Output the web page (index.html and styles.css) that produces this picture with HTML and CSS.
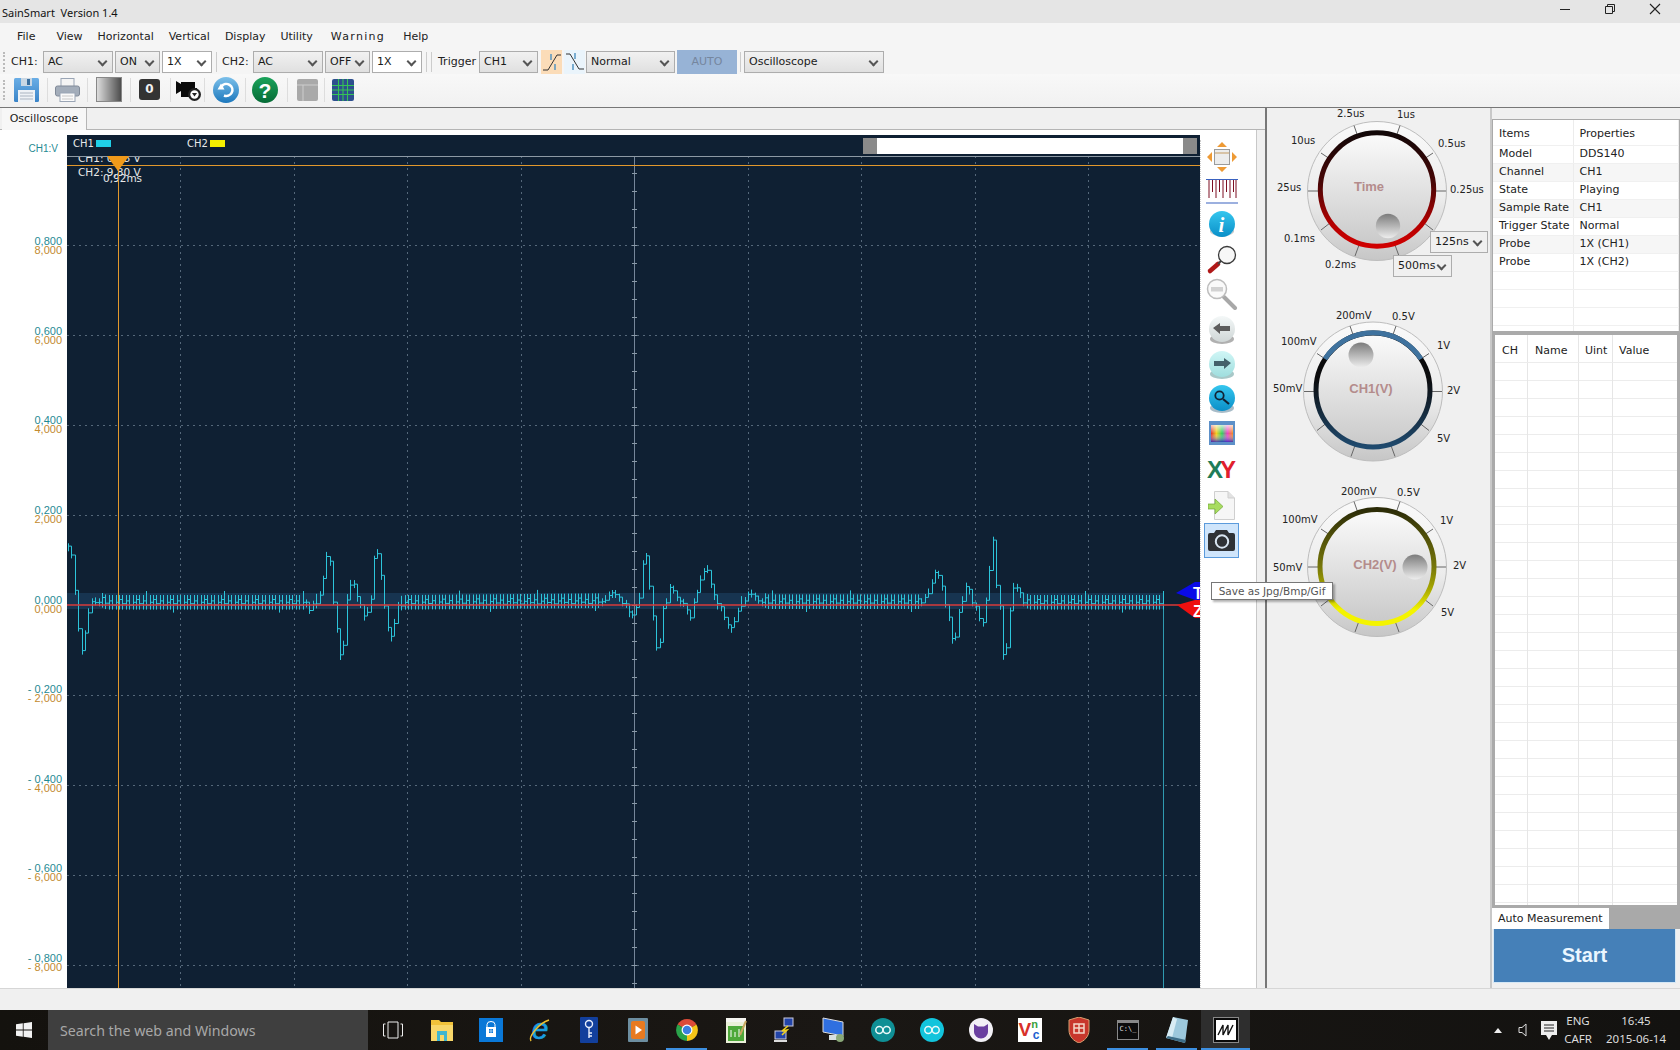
FILE: index.html
```html
<!DOCTYPE html>
<html lang="en">
<head>
<meta charset="utf-8">
<title>SainSmart Version 1.4</title>
<link rel="stylesheet" href="styles.css">
</head>
<body>
<svg class="defs" aria-hidden="true">
  <defs>
    <linearGradient id="dialOuter" x1="0" y1="0" x2="0" y2="1"><stop offset="0" stop-color="#fafafa"/><stop offset=".55" stop-color="#ececec"/><stop offset="1" stop-color="#c6c6c6"/></linearGradient>
    <linearGradient id="dialInner" x1="0" y1="0" x2="0" y2="1"><stop offset="0" stop-color="#fbfbfb"/><stop offset="1" stop-color="#c9c9c9"/></linearGradient>
    <linearGradient id="ball" x1="0" y1="0" x2="0" y2="1"><stop offset="0" stop-color="#7c7c7c"/><stop offset="1" stop-color="#ededed"/></linearGradient>
    <linearGradient id="ringTime" x1="0" y1="0" x2="0" y2="1"><stop offset="0" stop-color="#120808"/><stop offset=".45" stop-color="#4a0606"/><stop offset=".8" stop-color="#b30000"/><stop offset="1" stop-color="#d00000"/></linearGradient>
    <linearGradient id="ringCh1" x1="0" y1="0" x2="0" y2="1"><stop offset="0" stop-color="#0a0a0a"/><stop offset=".4" stop-color="#0c0c0e"/><stop offset="1" stop-color="#1f4a6e"/></linearGradient>
    <linearGradient id="ringCh2" x1="0" y1="0" x2="0" y2="1"><stop offset="0" stop-color="#2c2c08"/><stop offset=".5" stop-color="#76760a"/><stop offset=".7" stop-color="#a8a800"/><stop offset=".88" stop-color="#f4f400"/><stop offset="1" stop-color="#f4f400"/></linearGradient>
    <linearGradient id="cyanBall" x1="0" y1="0" x2="0" y2="1"><stop offset="0" stop-color="#35c6ee"/><stop offset="1" stop-color="#0a8fc8"/></linearGradient>
    <linearGradient id="paleBall" x1="0" y1="0" x2="0" y2="1"><stop offset="0" stop-color="#f4f8f8"/><stop offset="1" stop-color="#cfd6d6"/></linearGradient>
    <linearGradient id="mintBall" x1="0" y1="0" x2="0" y2="1"><stop offset="0" stop-color="#d0f6f6"/><stop offset="1" stop-color="#9fdede"/></linearGradient>
    <linearGradient id="floppy" x1="0" y1="0" x2="0" y2="1"><stop offset="0" stop-color="#6aaee6"/><stop offset="1" stop-color="#3a84c8"/></linearGradient>
    <linearGradient id="shade" x1="0" y1="0" x2="1" y2="0"><stop offset="0" stop-color="#e0e0e0"/><stop offset="1" stop-color="#4a4a4a"/></linearGradient>
    <linearGradient id="rainbow" x1="0" y1="0" x2="1" y2="0"><stop offset="0" stop-color="#e03030"/><stop offset=".25" stop-color="#f0d020"/><stop offset=".5" stop-color="#30d060"/><stop offset=".75" stop-color="#f040c0"/><stop offset="1" stop-color="#f09020"/></linearGradient>
    <linearGradient id="fade" x1="0" y1="0" x2="0" y2="1"><stop offset="0" stop-color="#fff" stop-opacity=".75"/><stop offset=".5" stop-color="#fff" stop-opacity="0"/><stop offset="1" stop-color="#2020c0" stop-opacity=".8"/></linearGradient>
    <linearGradient id="helpBall" x1="0" y1="0" x2="0" y2="1"><stop offset="0" stop-color="#1aa35a"/><stop offset="1" stop-color="#066b36"/></linearGradient>
    <linearGradient id="refreshBall" x1="0" y1="0" x2="0" y2="1"><stop offset="0" stop-color="#7cc0ea"/><stop offset="1" stop-color="#1c78bd"/></linearGradient>
    <g id="dial">
      <circle r="69.5" fill="url(#dialOuter)" stroke="#bdbdbd"/>
      <g stroke="#666" stroke-width="1">
        <path d="M-23 -65.5L-19 -54"/><path d="M23 -65.5L19 -54"/>
        <path d="M-56 -38L-47 -32"/><path d="M56 -38L47 -32"/>
        <path d="M-69 0H-58"/><path d="M69 0H58"/>
        <path d="M-56 39L-47 32"/><path d="M56 39L47 32"/>
        <path d="M-22 65L-18 54"/><path d="M22 65L18 54"/>
      </g>
    </g>
  </defs>
</svg>

<header class="titlebar">
  <span class="title">SainSmart  Version 1.4</span>
  <div class="winbtns">
    <svg width="12" height="12" viewBox="0 0 12 12"><path d="M1 6.5H11" stroke="#222"/></svg>
    <svg width="12" height="12" viewBox="0 0 12 12"><path d="M1.5 3.5H8.5V10.5H1.5ZM3.5 3.5V1.5H10.5V8.5H8.5" fill="none" stroke="#222"/></svg>
    <svg width="12" height="12" viewBox="0 0 12 12"><path d="M1 1L11 11M11 1L1 11" stroke="#222" stroke-width="1.1"/></svg>
  </div>
</header>

<nav class="menubar">
  <span class="menu-first">File</span><span>View</span><span>Horizontal</span><span>Vertical</span><span>Display</span><span>Utility</span><span class="menu-warn">Warning</span><span>Help</span>
</nav>

<div class="toolbar-one">
  <i class="grip"></i>
  <span class="lab lab-ch1">CH1:</span>
  <div class="sel w-70">AC</div>
  <div class="sel w-45">ON</div>
  <div class="sel sel-white w-50">1X</div>
  <i class="sep sep-a"></i>
  <span class="lab lab-ch2">CH2:</span>
  <div class="sel w-70">AC</div>
  <div class="sel w-45">OFF</div>
  <div class="sel sel-white w-50">1X</div>
  <i class="sep sep-a"></i><i class="sep sep-b"></i>
  <span class="lab lab-trig">Trigger</span>
  <div class="sel w-59">CH1</div>
  <div class="edge edge-up">
    <svg width="20" height="20" viewBox="0 0 20 20"><path d="M1 18H6L15 3H19" fill="none" stroke="#333"/><path d="M9 2V8M13 12V18" stroke="#4a90c0" stroke-width="1.4"/></svg>
  </div>
  <div class="edge edge-down">
    <svg width="20" height="20" viewBox="0 0 20 20"><path d="M1 2H5L14 17H19" fill="none" stroke="#333"/><path d="M10 1V7M8 12V18" stroke="#4a90c0" stroke-width="1.4"/></svg>
  </div>
  <div class="sel w-89">Normal</div>
  <div class="auto">AUTO</div>
  <i class="sep sep-c"></i>
  <div class="sel w-140">Oscilloscope</div>
</div>

<div class="toolbar-two">
  <i class="grip grip-two"></i>
  <svg class="tb-ico ico-save" width="25" height="24" viewBox="0 0 25 24"><rect width="25" height="24" rx="1.5" fill="url(#floppy)"/><rect x="7" y="0" width="11" height="8" fill="#c9d7e4"/><rect x="13" y="1" width="3" height="6" fill="#3a6f9f"/><rect x="4" y="12" width="17" height="12" fill="#eef2f6"/><path d="M6 15H19M6 18H19M6 21H19" stroke="#aab4c0"/></svg>
  <i class="tb-sep"></i>
  <svg class="tb-ico" width="25" height="24" viewBox="0 0 25 24"><rect x="6" y="0.5" width="13" height="8" fill="#f4f4f4" stroke="#9aa5b5"/><rect x="0.5" y="8" width="24" height="10" rx="2" fill="#a3adba" stroke="#808a98"/><rect x="5" y="15" width="15" height="8.5" fill="#fafafa" stroke="#9aa5b5"/><path d="M7 18H18M7 21H18" stroke="#c8c8c8"/></svg>
  <i class="tb-sep sep-t2"></i>
  <svg class="tb-ico" width="26" height="25" viewBox="0 0 26 25"><rect x=".5" y=".5" width="25" height="24" fill="url(#shade)" stroke="#888"/></svg>
  <i class="tb-sep sep-t3"></i>
  <div class="zero">0</div>
  <i class="tb-sep sep-t4"></i>
  <svg class="tb-ico" width="25" height="22" viewBox="0 0 25 22"><path d="M0 2L5 5V3H19V9H21V18H5V12L0 15Z" fill="#0a0a0a"/><circle cx="18.5" cy="15.5" r="6.5" fill="#222"/><circle cx="18.5" cy="15.5" r="4.2" fill="#fff"/><path d="M16 14H21L18.5 17.5Z" fill="#222"/></svg>
  <i class="tb-sep sep-t5"></i>
  <svg class="tb-ico" width="26" height="26" viewBox="0 0 26 26"><circle cx="13" cy="13" r="13" fill="url(#refreshBall)"/><path d="M8.5 9.5A6 6 0 1 1 11 18.5" fill="none" stroke="#fff" stroke-width="2.6"/><path d="M4.5 12.5H11.5L8 6.5Z" fill="#fff"/></svg>
  <i class="tb-sep sep-t8"></i>
  <svg class="tb-ico" width="26" height="26" viewBox="0 0 26 26"><circle cx="13" cy="13" r="13" fill="url(#helpBall)"/><text class="help-q" x="13" y="20.5" text-anchor="middle">?</text></svg>
  <i class="tb-sep sep-t6"></i>
  <svg class="tb-ico" width="21" height="22" viewBox="0 0 21 22"><rect width="21" height="22" rx="2" fill="#a9a9a9"/><path d="M0 6H21M6 6V22" stroke="#cdcdcd"/></svg>
  <i class="tb-sep sep-t7"></i>
  <svg class="tb-ico" width="22" height="22" viewBox="0 0 22 22"><rect width="22" height="22" rx="2" fill="#2d4f8e"/><path d="M0 6.5H22M0 11H22M0 15.5H22M6.5 0V22M11 0V22M15.5 0V22" stroke="#35c455" stroke-width="1.1"/></svg>
</div>

<main class="main">
  <section class="left">
    <div class="tabrow"><div class="tab">Oscilloscope</div></div>
    <div class="panel">
      <div class="axis">
        <div class="axis-name">CH1:V</div>
        <div class="tick"><b>0,800</b><em>8,000</em></div>
        <div class="tick"><b>0,600</b><em>6,000</em></div>
        <div class="tick"><b>0,400</b><em>4,000</em></div>
        <div class="tick"><b>0,200</b><em>2,000</em></div>
        <div class="tick"><b>0,000</b><em>0,000</em></div>
        <div class="tick"><b>- 0,200</b><em>- 2,000</em></div>
        <div class="tick"><b>- 0,400</b><em>- 4,000</em></div>
        <div class="tick"><b>- 0,600</b><em>- 6,000</em></div>
        <div class="tick"><b>- 0,800</b><em>- 8,000</em></div>
      </div>
      <svg class="scope" width="1133" height="853" viewBox="67 135 1133 853">
        <rect x="67" y="135" width="1133" height="853" fill="#0f2033"/>
        <rect x="67" y="593" width="1096" height="16" fill="#173450"/>
        <g class="grid-v">
          <path d="M180.5 156V988"/><path d="M294.5 156V988"/><path d="M407.5 156V988"/><path d="M521.5 156V988"/><path d="M748.5 156V988"/><path d="M861.5 156V988"/><path d="M975.5 156V988"/><path d="M1088.5 156V988"/>
        </g>
        <g class="grid-h">
          <path d="M67 245.5H1200"/><path d="M67 335.5H1200"/><path d="M67 425.5H1200"/><path d="M67 515.5H1200"/><path d="M67 695.5H1200"/><path d="M67 785.5H1200"/><path d="M67 875.5H1200"/><path d="M67 965.5H1200"/>
        </g>
        <path d="M634.5 156V988" stroke="#75869a"/>
        <path class="ticks" d="M634.5 155V988"/>
        <text class="cursor" x="78" y="162">CH1: 0,98 V</text>
        <rect x="67" y="135" width="1133" height="21" fill="#0f2033"/>
        <text class="cursor" x="78" y="176">CH2: 9,80 V</text>
        <text class="cursor" x="103" y="182">0,92ms</text>
        <path d="M67 156.5H1200" stroke="#8d99a4"/>
        <path d="M67 165.5H1200" stroke="#e2982c"/>
        <path d="M118.5 156V988" stroke="#e2982c"/>
        <path d="M107 156H129L118 171Z" fill="#f09a1a"/>
        <path d="M1163.5 605V988" stroke="#2f9ab0"/>
        <path id="wave" fill="none" stroke="#2cc4da" stroke-width="1"/>
        <path d="M67 605H1180" stroke="#d83a3a" stroke-width="1.4"/>
        <path d="M1176 593L1195 582H1200V600H1195Z" fill="#0a0ae8"/>
        <path d="M1177 605L1195 600H1200V618H1195Z" fill="#ee1010"/>
        <text class="marker" x="1193" y="599">T</text>
        <text class="marker" x="1193" y="617">Z</text>
        <text class="legend" x="73" y="147">CH1</text>
        <rect x="96" y="140" width="15" height="7" fill="#20d0e8"/>
        <text class="legend" x="187" y="147">CH2</text>
        <rect x="210" y="140" width="15" height="7" fill="#f6f000"/>
        <rect x="877" y="138" width="306" height="16" fill="#fff"/>
        <rect x="863" y="138" width="14" height="16" fill="#8a8a8a"/>
        <rect x="1183" y="138" width="14" height="16" fill="#8a8a8a"/>
      </svg>
      <div class="tools">
        <svg width="32" height="32" viewBox="0 0 32 32"><path d="M16 1L21 6H11ZM16 31L21 26H11ZM1 16L6 11V21ZM31 16L26 11V21Z" fill="#ee9a35"/><rect x="8.5" y="8.5" width="15" height="15" fill="#ececec" stroke="#9b9b9b"/><path d="M9 12H23" stroke="#c39a60"/></svg>
        <svg width="32" height="26" viewBox="0 0 32 26"><path d="M3 2V20M6.5 2V14M10 2V20M13.5 2V14M17 2V20M20.5 2V14M24 2V20M27.5 2V14M30 2V20" stroke="#7d0f22" stroke-width="1"/><path d="M0 1.5H32M0 25H32" stroke="#3a62c0" stroke-width="1.2"/></svg>
        <svg width="30" height="30" viewBox="0 0 30 30"><path d="M3 19A13 13 0 0 0 27 19V22A13 7 0 0 1 3 22Z" fill="#c8c8c8"/><circle cx="15" cy="14" r="13" fill="url(#cyanBall)"/><text class="info-i" x="14.5" y="22" text-anchor="middle">i</text></svg>
        <svg width="32" height="30" viewBox="0 0 32 30"><path d="M4 26L12 19" stroke="#b01818" stroke-width="4.5" stroke-linecap="round"/><path d="M12 19L15 16" stroke="#444" stroke-width="2"/><circle cx="21" cy="10" r="8.5" fill="#f7f7f7" stroke="#3a3a3a" stroke-width="1.3"/></svg>
        <svg width="32" height="32" viewBox="0 0 32 32"><path d="M18 19L29 30" stroke="#a8a8a8" stroke-width="4" stroke-linecap="round"/><circle cx="11" cy="11" r="9.5" fill="#fafafa" stroke="#bdbdbd" stroke-width="1.5"/><rect x="5" y="9" width="12" height="4.5" fill="#d2d2d2"/></svg>
        <svg width="30" height="30" viewBox="0 0 30 30"><ellipse cx="15" cy="24" rx="12" ry="5" fill="#b0b0b0"/><circle cx="15" cy="14" r="13" fill="url(#paleBall)"/><path d="M6 13L13 8V11H23V16H13V19Z" fill="#5c5c5c"/></svg>
        <svg width="30" height="30" viewBox="0 0 30 30"><ellipse cx="15" cy="24" rx="12" ry="5" fill="#a8c8c8"/><circle cx="15" cy="14" r="13" fill="url(#mintBall)"/><path d="M24 13L17 8V11H7V16H17V19Z" fill="#44606a"/></svg>
        <svg width="30" height="30" viewBox="0 0 30 30"><ellipse cx="15" cy="24" rx="12" ry="5" fill="#a8bcc8"/><circle cx="15" cy="14" r="13" fill="url(#cyanBall)"/><circle cx="12.5" cy="11.5" r="4.2" fill="none" stroke="#123" stroke-width="1.8"/><path d="M16 15L22 20" stroke="#123" stroke-width="2.2"/></svg>
        <svg width="26" height="24" viewBox="0 0 26 24"><rect width="26" height="24" fill="#5d90c8"/><rect x="2" y="4" width="22" height="17" fill="url(#rainbow)"/><rect x="2" y="4" width="22" height="17" fill="url(#fade)"/></svg>
        <svg class="ico-xy" width="30" height="28" viewBox="0 0 30 28"><text class="xy xy-x" x="0" y="23">X</text><text class="xy xy-y" x="13" y="23">Y</text></svg>
        <svg class="ico-doc" width="28" height="30" viewBox="0 0 28 30"><path d="M6.5 .5H20L26.5 7V28.5H6.5Z" fill="#f6f6f6" stroke="#cfcfcf"/><path d="M20 .5V7H26.5" fill="#e2e2e2" stroke="#cfcfcf"/><path d="M0 13H7V8L15 15.5L7 23V18H0Z" fill="#a8dc60" stroke="#70a838" stroke-width=".7"/></svg>
        <div class="cam">
          <svg width="27" height="21" viewBox="0 0 27 21"><path d="M2 3H6L8 0H19L21 3H25A2 2 0 0 1 27 5V19A2 2 0 0 1 25 21H2A2 2 0 0 1 0 19V5A2 2 0 0 1 2 3Z" fill="#2f3236"/><circle cx="14" cy="11.5" r="6.2" fill="none" stroke="#d9e6f2" stroke-width="2"/></svg>
        </div>
      </div>
    </div>
  </section>

  <section class="dials">
    <div class="dial-box dial-time">
      <svg width="223" height="188" viewBox="1267 108 223 188">
        <use href="#dial" x="1377" y="191"/>
        <circle cx="1377" cy="189.5" r="56.7" fill="url(#dialInner)" stroke="url(#ringTime)" stroke-width="5"/>
        <circle cx="1388" cy="226" r="12.2" fill="url(#ball)"/>
        <text class="dial-name" x="1369" y="191" text-anchor="middle">Time</text>
        <text x="1337" y="117">2.5us</text><text x="1397" y="118">1us</text>
        <text x="1291" y="144">10us</text><text x="1438" y="147">0.5us</text>
        <text x="1277" y="191">25us</text><text x="1450" y="193">0.25us</text>
        <text x="1284" y="242">0.1ms</text><text x="1325" y="268">0.2ms</text>
      </svg>
      <div class="sel sel-flat sel-125">125ns</div>
      <div class="sel sel-flat sel-500">500ms</div>
    </div>
    <div class="dial-box">
      <svg width="223" height="180" viewBox="1267 296 223 180">
        <use href="#dial" x="1373" y="391.5"/>
        <circle cx="1373" cy="390" r="57" fill="url(#dialInner)" stroke="url(#ringCh1)" stroke-width="5"/>
        <path d="M1325 359A57 57 0 0 1 1421 359" fill="none" stroke="#3f729e" stroke-width="5"/>
        <circle cx="1361" cy="355" r="12.5" fill="url(#ball)"/>
        <text class="dial-name" x="1371" y="392.5" text-anchor="middle">CH1(V)</text>
        <text x="1336" y="319">200mV</text><text x="1392" y="320">0.5V</text>
        <text x="1281" y="345">100mV</text><text x="1437" y="349">1V</text>
        <text x="1273" y="392">50mV</text><text x="1447" y="394">2V</text>
        <text x="1437" y="442">5V</text>
      </svg>
    </div>
    <div class="dial-box">
      <svg width="223" height="174" viewBox="1267 476 223 174">
        <use href="#dial" x="1377" y="567"/>
        <circle cx="1377" cy="566.5" r="57" fill="url(#dialInner)" stroke="url(#ringCh2)" stroke-width="5"/>
        <circle cx="1415" cy="567" r="12.5" fill="url(#ball)"/>
        <text class="dial-name" x="1375" y="568.5" text-anchor="middle">CH2(V)</text>
        <text x="1341" y="495">200mV</text><text x="1397" y="496">0.5V</text>
        <text x="1282" y="523">100mV</text><text x="1440" y="524">1V</text>
        <text x="1273" y="571">50mV</text><text x="1453" y="569">2V</text>
        <text x="1441" y="616">5V</text>
      </svg>
    </div>
  </section>

  <section class="side">
    <div class="props-wrap">
      <table class="props">
        <tr class="head"><td>Items</td><td>Properties</td></tr>
        <tr><td>Model</td><td>DDS140</td></tr>
        <tr class="alt"><td>Channel</td><td>CH1</td></tr>
        <tr><td>State</td><td>Playing</td></tr>
        <tr class="alt"><td>Sample Rate</td><td>CH1</td></tr>
        <tr><td>Trigger State</td><td>Normal</td></tr>
        <tr class="alt"><td>Probe</td><td>1X (CH1)</td></tr>
        <tr><td>Probe</td><td>1X (CH2)</td></tr>
        <tr><td></td><td></td></tr>
        <tr><td></td><td></td></tr>
        <tr><td></td><td></td></tr>
        <tr><td></td><td></td></tr>
      </table>
    </div>
    <div class="measure">
      <div class="measure-head"><span class="c-ch">CH</span><span class="c-name">Name</span><span class="c-uint">Uint</span><span class="c-val">Value</span></div>
      <div class="measure-body"></div>
    </div>
    <div class="side-tabs"><div class="side-tab">Auto Measurement</div></div>
    <div class="start">Start</div>
  </section>
</main>

<div class="statusbar"></div>

<footer class="taskbar">
  <div class="start-btn"><svg width="16" height="16" viewBox="0 0 16 16"><path d="M0 2.3L6.8 1.3V7.5H0ZM7.6 1.2L16 0V7.5H7.6ZM0 8.4H6.8V14.7L0 13.7ZM7.6 8.4H16V16L7.6 14.8Z" fill="#f2f2f2"/></svg></div>
  <div class="search">Search the web and Windows</div>
  <div class="apps">
    <div class="app"><svg width="20" height="18" viewBox="0 0 20 18"><path d="M2.5 3H.5V15H2.5M17.5 3H19.5V15H17.5M5 1H15V17H5Z" fill="none" stroke="#eee"/></svg></div>
    <div class="app"><svg width="22" height="22" viewBox="0 0 22 22"><path d="M0 1H8L10 3H22V22H0Z" fill="#f0c23a"/><rect y="6" width="22" height="16" fill="#f7d76a"/><rect x="6" y="12" width="10" height="10" fill="#3fb6d0"/><rect x="9" y="16" width="4" height="6" fill="#f7d76a"/></svg></div>
    <div class="app"><svg width="24" height="24" viewBox="0 0 24 24"><rect width="24" height="24" fill="#0a78d7"/><path d="M8 9V6.5A4 3 0 0 1 16 6.5V9" fill="none" stroke="#fff"/><rect x="7" y="9" width="10" height="10" fill="#fff"/><path d="M10 11h1.7v1.7H10zM12.3 11H14v1.7h-1.7zM10 13.3h1.7V15H10zM12.3 13.3H14V15h-1.7z" fill="#0a78d7"/></svg></div>
    <div class="app"><svg width="26" height="36" viewBox="0 0 26 36"><text class="ie" x="13" y="27" text-anchor="middle">e</text><path d="M4 29C1 25 12 11 22 8" fill="none" stroke="#f0c030" stroke-width="1.5"/></svg></div>
    <div class="app"><svg width="18" height="26" viewBox="0 0 18 26"><rect width="18" height="26" rx="1" fill="#123f9c"/><circle cx="9" cy="7" r="3.5" fill="none" stroke="#e8eefc" stroke-width="1.4"/><path d="M9 10.5V21M9 16H12M9 19H12" stroke="#e8eefc" stroke-width="1.4"/></svg></div>
    <div class="app"><svg width="20" height="24" viewBox="0 0 20 24"><rect width="20" height="24" rx="1" fill="#6d8ea0"/><rect x="3" y="3" width="14" height="18" rx="2" fill="#e87a20"/><path d="M7.5 7.5L14 12L7.5 16.5Z" fill="#fff"/></svg></div>
    <div class="app"><svg width="24" height="24" viewBox="0 0 22 22"><path d="M11 11L2.34 6A10 10 0 0 1 19.66 6Z" fill="#dd4b39"/><path d="M11 11L19.66 6A10 10 0 0 1 11 21Z" fill="#f5c518"/><path d="M11 11L11 21A10 10 0 0 1 2.34 6Z" fill="#2aa34a"/><circle cx="11" cy="11" r="5" fill="#fff"/><circle cx="11" cy="11" r="3.9" fill="#3d7fe0"/></svg></div>
    <div class="app"><svg width="22" height="26" viewBox="0 0 22 26"><rect x="1" y="1" width="20" height="25" fill="#eaf0d8"/><rect x="3" y="9" width="16" height="15" fill="#4ea83a"/><path d="M1 1H21V5H1Z" fill="#f5f5f0"/><path d="M6 20V13M10 20V15M14 20V12" stroke="#fff"/><path d="M15 18L21 4" stroke="#c8a860" stroke-width="2"/></svg></div>
    <div class="app"><svg width="24" height="26" viewBox="0 0 24 26"><rect x="11" y="1" width="9" height="8" fill="#2244a8" stroke="#ccd"/><rect x="2" y="14" width="11" height="8" fill="#2244a8" stroke="#ccd"/><rect x="1" y="23" width="13" height="2" fill="#ddd"/><path d="M15 9L9 14L14 13L9 18" fill="none" stroke="#f0d020" stroke-width="1.6"/></svg></div>
    <div class="app"><svg width="26" height="26" viewBox="0 0 26 26"><path d="M2 1L22 5V19L2 15Z" fill="#2f6fe0" stroke="#ddd"/><rect x="8" y="18" width="14" height="5" fill="#d8e0e0"/><circle cx="19" cy="21" r="4" fill="#8aa878"/></svg></div>
    <div class="app"><svg width="24" height="24" viewBox="0 0 24 24"><circle cx="12" cy="12" r="12" fill="#0f8f95"/><circle cx="8.3" cy="12" r="3.5" fill="none" stroke="#e8f8f8" stroke-width="1.5"/><circle cx="15.7" cy="12" r="3.5" fill="none" stroke="#e8f8f8" stroke-width="1.5"/></svg></div>
    <div class="app"><svg width="24" height="24" viewBox="0 0 24 24"><circle cx="12" cy="12" r="12" fill="#12c4dc"/><circle cx="8.3" cy="12" r="3.5" fill="none" stroke="#e8f8f8" stroke-width="1.5"/><circle cx="15.7" cy="12" r="3.5" fill="none" stroke="#e8f8f8" stroke-width="1.5"/></svg></div>
    <div class="app"><svg width="24" height="24" viewBox="0 0 24 24"><circle cx="12" cy="12" r="12" fill="#f2f0f6"/><path d="M5 6L9 8.5H15L19 6V14A7 6.5 0 0 1 5 14Z" fill="#6a3fa0"/></svg></div>
    <div class="app"><div class="vnc"><span class="vnc-v">V</span><span class="vnc-n">n</span><span class="vnc-c">c</span></div></div>
    <div class="app"><svg width="22" height="26" viewBox="0 0 22 26"><path d="M1 3L11 0L21 3V13C21 20 16 24 11 26C6 24 1 20 1 13Z" fill="#c8372c" stroke="#d8a070"/><path d="M6 7H16V16H6Z" fill="none" stroke="#f4d8c8" stroke-width="1.5"/><path d="M6 11H16M11 7V16" stroke="#f4d8c8" stroke-width="1.5"/></svg></div>
    <div class="app"><div class="cmd">C:\_</div></div>
    <div class="app"><svg width="24" height="28" viewBox="0 0 24 28"><path d="M8 1L23 4L20 27L1 22Z" fill="#9cc8dc"/><path d="M8 1L12 3L7 22L1 22Z" fill="#d8ecf4"/><path d="M1 22L20 27L21 24L3 20Z" fill="#3e6e88"/></svg></div>
    <div class="app app-active"><div class="scope-app"><svg width="20" height="20" viewBox="0 0 20 20"><path d="M2 15L7 5V15L12 5V15L17 5" fill="none" stroke="#111" stroke-width="1.4"/></svg></div></div>
  </div>
  <div class="tray">
    <svg class="tray-arrow" width="8" height="5" viewBox="0 0 8 5"><path d="M0 5L4 0L8 5Z" fill="#eee"/></svg>
    <svg class="tray-sound" width="10" height="16" viewBox="0 0 10 16"><path d="M1 5.5H4L8 2V14L4 10.5H1Z" fill="none" stroke="#ddd"/></svg>
    <svg class="tray-note" width="16" height="19" viewBox="0 0 16 19"><path d="M0 0H16V14H11L8 19L5 14H0Z" fill="#eee"/><path d="M3 4H13M3 7H13M3 10H13" stroke="#222"/></svg>
    <div class="tray-text tray-lang"><span>ENG</span><span>CAFR</span></div>
    <div class="tray-text tray-clock"><span>16:45</span><span>2015-06-14</span></div>
  </div>
</footer>

<div class="tooltip">Save as Jpg/Bmp/Gif</div>
<script src="wave.js"></script>
</body>
</html>
```

FILE: styles.css
```css
* { box-sizing: border-box; }
html, body { margin: 0; padding: 0; }
body {
  width: 1680px; height: 1050px; overflow: hidden; position: relative;
  display: flex; flex-direction: column;
  font: 11px/1.2 "DejaVu Sans", sans-serif; color: #222; background: #f0f0f0;
}
.defs { position: absolute; width: 0; height: 0; }

.titlebar { height: 23px; background: #e5e5e5; display: flex; align-items: center; justify-content: space-between; flex: none; }
.title { white-space: pre; padding: 2px 0 0 2px; font: 11px "Noto Sans", sans-serif; color: #111; }
.winbtns { display: flex; gap: 33px; padding-right: 19px; margin-top: -6px; }

.menubar { height: 26px; background: #f5f5f5; display: flex; align-items: center; gap: 15px; padding: 1px 0 0 17px; flex: none; color: #222; }
.menu-first { margin-right: 6px; }
.menu-warn { letter-spacing: 1.3px; margin-left: 3px; margin-right: 3px; }

.toolbar-one { height: 25px; background: #f5f5f5; display: flex; align-items: center; gap: 2px; padding-left: 3px; flex: none; position: relative; }
.grip { width: 2px; height: 20px; border-left: 2px dotted #bbb; margin-right: 2px; }
.lab { flex: none; }
.lab-ch1 { width: 30px; margin-left: 2px; }
.lab-ch2 { width: 29px; margin-left: 1px; }
.lab-trig { width: 39px; margin-left: 2px; }
.sel {
  position: relative; height: 22px; flex: none; border: 1px solid #adadad;
  background: linear-gradient(#f1f1f1, #e0e0e0);
  padding-left: 4px; display: flex; align-items: center; color: #1a1a1a;
}
.sel::after {
  content: ""; position: absolute; right: 6px; top: 6px; width: 5px; height: 5px;
  border-right: 2px solid #555; border-bottom: 2px solid #555; transform: rotate(45deg);
}
.sel-white { background: #fff; }
.w-45 { width: 45px; } .w-50 { width: 50px; } .w-59 { width: 59px; } .w-70 { width: 70px; } .w-89 { width: 89px; } .w-140 { width: 140px; }
.sep { width: 1px; height: 20px; background: #ccc; flex: none; }
.sep-a { margin: 0 2px; }
.sep-b { margin: 0 2px 0 0; }
.sep-c { margin: 0 1px; }
.edge { width: 21px; height: 24px; display: flex; align-items: center; justify-content: center; flex: none; }
.edge-up { background: #fbdcb8; margin-left: 1px; }
.edge-down { background: #eaf4fb; margin-right: -1px; }
.auto { width: 60px; height: 24px; background: #97b3d6; color: #75869e; display: flex; align-items: center; justify-content: center; flex: none; }

.toolbar-two { height: 33px; background: linear-gradient(#f8f8f8, #f1f1f1); display: flex; align-items: center; padding: 0 0 2px 3px; flex: none; }
.grip-two { margin-right: 7px; }
.ico-save { margin-left: 2px; }
.tb-ico { flex: none; }
.tb-sep { width: 1px; height: 24px; background: #ddd; margin: 0 7px 0 8px; flex: none; }
.sep-t2 { margin: 0 8px 0 7px; }
.sep-t3 { margin: 0 8px 0 8px; }
.sep-t4 { margin: 0 5px 0 10px; }
.sep-t5 { margin: 0 8px 0 3px; }
.sep-t8 { margin: 0 6px 0 6px; }
.sep-t6 { margin: 0 9px 0 9px; }
.sep-t7 { margin: 0 7px 0 6px; }
.zero { width: 21px; height: 21px; border-radius: 3px; background: #333; color: #f0f0f0; font-weight: bold; font-size: 12px; display: flex; align-items: center; justify-content: center; flex: none; }
.help-q { font: bold 21px "Liberation Sans", sans-serif; fill: #fff; }

.main { flex: 1; display: flex; min-height: 0; border-top: 1px solid #777; }
.left { width: 1267px; display: flex; flex-direction: column; border-right: 2px solid #777; flex: none; }
.tabrow { height: 22px; border-bottom: 1px solid #b5b5b5; padding-left: 2px; flex: none; }
.tab { width: 85px; height: 22px; background: #f7f7f7; border-right: 1px solid #b5b5b5; display: flex; align-items: center; justify-content: center; }
.panel { flex: 1; width: 1257px; background: #fff; border-right: 1px solid #c8c8c8; display: flex; min-height: 0; padding-top: 5px; }
.axis { width: 67px; flex: none; padding-right: 5px; text-align: right; font: 11px/9px "Liberation Sans", sans-serif; margin-top: -5px; }
.axis-name { height: 71.5px; padding-top: 14px; color: #1f8a94; font-size: 10px; line-height: 10px; margin-right: 4px; }
.tick { height: 89.6px; display: flex; flex-direction: column; justify-content: center; align-items: flex-end; }
.tick b { font-weight: normal; color: #1f8a94; }
.tick em { font-style: normal; color: #c28a30; }
.scope { flex: none; display: block; }
.grid-v path { stroke: #55687a; stroke-dasharray: 2 4; fill: none; }
.grid-h path { stroke: #55687a; stroke-dasharray: 2 4; fill: none; }
.ticks { stroke: #8b9aa8; stroke-dasharray: 1 17; stroke-width: 5; fill: none; }
.cursor { font: 10.5px "DejaVu Sans", sans-serif; fill: #e8e8e8; }
.legend { font: 10px "DejaVu Sans", sans-serif; fill: #e8e8e8; }
.marker { font: bold 16px "Liberation Sans", sans-serif; fill: #fff; }
.tools { width: 56px; flex: none; display: grid; justify-items: center; align-items: center; margin-top: 5px; align-content: start; padding-right: 14px;
  grid-template-rows: 34px 33px 36px 33px 36px 35px 35px 34px 34px 37px 34px 38px; border-left: 1px dotted #ccc; }
.ico-doc { margin-top: 3px; }
.info-i { font: italic bold 21px "Liberation Serif", serif; fill: #fff; }
.xy { font: bold 24px "Liberation Sans", sans-serif; }
.xy-x { fill: #1e7c58; }
.xy-y { fill: #e0202e; }
.cam { width: 35px; height: 35px; background: #cfe5fb; border: 1px solid #5b9bdc; display: flex; align-items: center; justify-content: center; }

.dials { width: 223px; flex: none; background: #f0f0f0; display: flex; flex-direction: column; }
.dial-box { position: relative; flex: none; }
.dial-box svg { display: block; }
.dial-box text { font: 10px "DejaVu Sans", sans-serif; fill: #222; }
.dial-box text.dial-name { font: bold 13px "Liberation Sans", sans-serif; fill: #b48c8c; }
.sel-flat { position: absolute; height: 22px; background: #f0f0f0; }
.sel-125 { left: 163px; top: 123px; width: 58px; }
.sel-500 { left: 126px; top: 147px; width: 59px; }

.side { flex: 1; display: flex; flex-direction: column; padding: 11px 0 5px; border-left: 2px solid #c8c8c8; min-width: 0; }
.props-wrap { height: 213px; overflow: hidden; background: #fff; border: 1px solid #aaa; flex: none; }
.props { width: 100%; border-collapse: collapse; table-layout: fixed; }
.props td { padding: 0 0 0 6px; height: 18px; border-bottom: 1px solid #f0f0f0; border-right: 1px solid #ececec; overflow: hidden; white-space: nowrap; }
.props td:first-child { width: 80px; }
.props .head td { height: 25px; padding-top: 2px; }
.props .alt td { background: #f6f6f6; }
.measure { flex: 1; border: 3px solid #aaa; background: #fff; display: flex; flex-direction: column; min-height: 0; }
.measure-head { height: 28px; display: flex; align-items: center; flex: none; border-bottom: 1px solid #ececec; }
.measure-head span { flex: none; height: 100%; display: flex; align-items: center; padding-top: 5px; border-right: 1px solid #e6e6e6; }
.c-ch { width: 33px; padding-left: 7px; } .c-name { width: 51px; padding-left: 7px; } .c-uint { width: 34px; padding-left: 6px; } .c-val { width: 50px; padding-left: 6px; }
.measure-head .c-val { border-right: 0; }
.measure-body {
  flex: 1;
  background:
    linear-gradient(#e6e6e6,#e6e6e6) 32px 0/1px 100% no-repeat,
    linear-gradient(#e6e6e6,#e6e6e6) 83px 0/1px 100% no-repeat,
    linear-gradient(#e6e6e6,#e6e6e6) 117px 0/1px 100% no-repeat,
    repeating-linear-gradient(#fff 0 17px, #ececec 17px 18px);
}
.side-tabs { height: 21px; background: #a9a9a9; flex: none; }
.side-tab { width: 117px; height: 21px; background: #fff; display: flex; align-items: center; padding-left: 6px; }
.start { height: 54px; margin: 0 4px 0 1px; background: #4580b8; border: 1px solid #d5e8f6; border-top: 0; color: #eaf6ff; font: bold 20px "Liberation Sans", sans-serif; display: flex; align-items: center; justify-content: center; flex: none; }

.statusbar { height: 22px; flex: none; background: #f0f0f0; border-top: 1px solid #d6d6d6; }

.taskbar { height: 40px; flex: none; display: flex; align-items: center; background: linear-gradient(90deg, #14120e, #1a1714 50%, #131210); color: #ddd; font-family: "Noto Sans", sans-serif; }
.start-btn { width: 48px; height: 40px; display: flex; align-items: center; justify-content: center; flex: none; }
.search { width: 320px; height: 40px; background: #3f3f3f; color: #a8a8a8; font-size: 14.2px; display: flex; align-items: center; padding: 1px 0 0 12px; flex: none; }
.apps { display: flex; flex: none; }
.app { width: 49px; height: 40px; display: flex; align-items: center; justify-content: center; flex: none; position: relative; }
.app:nth-child(7)::after, .app:nth-child(16)::after, .app:nth-child(17)::after, .app:nth-child(18)::after {
  content: ""; position: absolute; left: 4px; right: 4px; bottom: 0; height: 2px; background: #3d8fe0;
}
.app-active { background: #2e2e2e; }
.app:nth-child(18)::after { left: 0; right: 0; }
.ie { font: italic 30px "Liberation Sans", sans-serif; fill: #1a9ee0; stroke: #1a9ee0; stroke-width: .6px; }
.vnc { width: 24px; height: 24px; background: #fff; display: flex; align-items: flex-start; font: bold 15px/18px "Liberation Sans", sans-serif; position: relative; padding-left: 1px; }
.vnc-v { color: #d8302a; font-size: 19px; line-height: 23px; }
.vnc-n { color: #3aa040; font-size: 11px; line-height: 12px; }
.vnc-c { color: #2060d0; font-size: 12px; line-height: 12px; position: absolute; right: 2px; top: 11px; }
.cmd { width: 22px; height: 20px; background: #0c0c0c; border: 1px solid #888; border-top-width: 3px; color: #ddd; font: 7px/12px "DejaVu Sans Mono", monospace; padding-left: 2px; }
.scope-app { width: 24px; height: 24px; background: #fff; border: 2px solid #0a0a0a; outline: 1px solid #888; display: flex; align-items: center; justify-content: center; }
.tray { flex: 1; min-width: 0; display: flex; align-items: center; height: 40px; font-size: 11.5px; padding-left: 244px; }
.tray svg { flex: none; }
.tray-arrow { margin-right: 16px; }
.tray-sound { margin-right: 13px; }
.tray-note { margin-right: 4px; }
.tray-text { display: flex; flex-direction: column; align-items: center; justify-content: space-between; height: 36px; line-height: 18px; color: #dcdcdc; flex: none; white-space: nowrap; }
.tray-lang { width: 34px; }
.tray-clock { width: 62px; margin-left: 10px; }

.tooltip { position: absolute; left: 1211px; top: 582px; width: 122px; height: 18px; background: #fff; border: 1px solid #777; box-shadow: 2px 2px 2px rgba(0,0,0,.3); color: #555; font-size: 10.5px; display: flex; align-items: center; justify-content: center; white-space: nowrap; }
```

FILE: wave.js
```js
// Builds the sampled trace: H-shaped steps following the measured envelope.
(function () {
  var first = [[25,100],[38,130],[45,240],[50,300],[55,370],[65,435],[72,420],[78,350],[85,320],[95,270],[105,262],[140,277],
    [730,277],[750,315],[770,270],[785,225],[800,120],[810,145],[815,210],[825,320],[832,390],[842,465],[850,420],[855,320],[865,235],[875,190],[885,225],[900,290],[915,345],[925,300],[935,235],[945,95],[958,135],[968,250],[975,320],[990,405],[1000,370],[1010,310],[1020,280],[1035,277]];
  var second = [[0,272],[30,240],[50,240],[70,275],[90,330],[105,320],[120,235],[132,105],[142,145],[150,235],[160,350],[172,450],[182,390],[190,300],[200,265],[212,210],[230,250],[250,290],[270,335],[285,265],[305,180],[322,165],[335,225],[355,285],[390,375],[410,330],[425,275],[450,235],[480,262],[500,275],
    [960,275],[985,235],[1010,165],[1025,215],[1035,290],[1050,350],[1060,435],[1075,330],[1085,265],[1100,205],[1120,275],[1135,330],[1148,350],[1160,245],[1178,75],[1188,205],[1200,310],[1210,465],[1220,420],[1230,310],[1240,215],[1255,225],[1270,270],[1290,277]];
  var pts = [];
  first.forEach(function (p) { pts.push([60 + p[0] / 3, 510 + p[1] / 3]); });
  second.forEach(function (p) { pts.push([600 + p[0] / 3, 510 + p[1] / 3]); });
  var base = 602.3;
  function env(x) {
    if (x <= pts[0][0]) return pts[0][1];
    for (var i = 1; i < pts.length; i++) {
      if (x <= pts[i][0]) {
        var a = pts[i - 1], b = pts[i];
        return a[1] + (b[1] - a[1]) * (x - a[0]) / (b[0] - a[0]);
      }
    }
    return base;
  }
  var d = "", step = 3.4, i = 0, prevX = null, prevMid = null;
  for (var x = 68; x < 1163; x += step, i++) {
    var raw = env(x), off = raw - base, flat = Math.abs(off) < 2;
    var amp = flat ? 7.3 : 4;
    var c = flat ? raw : raw - Math.sign(off) * Math.min(amp, Math.abs(off));
    var top = c - amp, bot = c + amp;
    if (flat) {
      if ((i * 7) % 23 === 0) top -= 4;
      if ((i * 5) % 31 === 0) bot += 3;
    }
    var xa = Math.round(x) + 0.5;
    var mid = c + ((i * 3) % 5 - 2) * (flat ? 1.4 : 0.6);
    // Each sample is a vertical bar that also reaches the level of the previous link.
    if (prevX !== null) {
      d += "M" + prevX + " " + prevMid.toFixed(1) + "H" + xa;
      top = Math.min(top, prevMid);
      bot = Math.max(bot, prevMid);
    }
    d += "M" + xa + " " + top.toFixed(1) + "V" + bot.toFixed(1);
    prevX = xa;
    prevMid = mid;
  }
  document.getElementById("wave").setAttribute("d", d);
})();
```
